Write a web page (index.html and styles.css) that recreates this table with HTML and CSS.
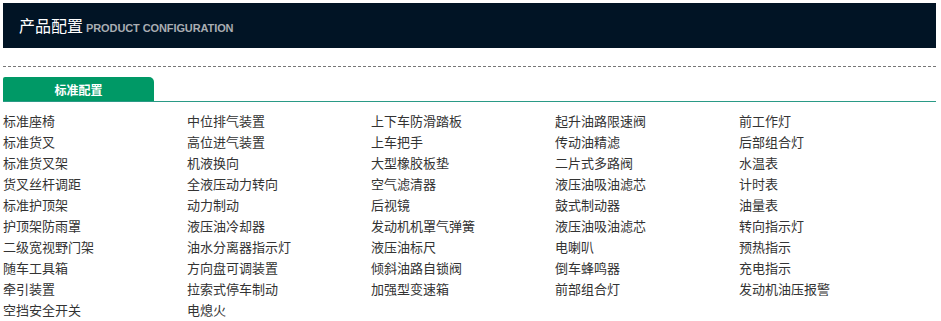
FILE: index.html
```html
<!DOCTYPE html>
<html lang="zh-CN">
<head>
<meta charset="utf-8">
<title>产品配置</title>
<link rel="stylesheet" href="styles.css">
</head>
<body>
<div class="page">
  <div class="head">
    <span class="head-cn">产品配置</span>
    <span class="head-en">PRODUCT CONFIGURATION</span>
  </div>
  <div class="dash"></div>
  <div class="tabs">
    <div class="tab">标准配置</div>
  </div>
  <ul class="list">
    <li>标准座椅</li><li>中位排气装置</li><li>上下车防滑踏板</li><li>起升油路限速阀</li><li>前工作灯</li>
    <li>标准货叉</li><li>高位进气装置</li><li>上车把手</li><li>传动油精滤</li><li>后部组合灯</li>
    <li>标准货叉架</li><li>机液换向</li><li>大型橡胶板垫</li><li>二片式多路阀</li><li>水温表</li>
    <li>货叉丝杆调距</li><li>全液压动力转向</li><li>空气滤清器</li><li>液压油吸油滤芯</li><li>计时表</li>
    <li>标准护顶架</li><li>动力制动</li><li>后视镜</li><li>鼓式制动器</li><li>油量表</li>
    <li>护顶架防雨罩</li><li>液压油冷却器</li><li>发动机机罩气弹簧</li><li>液压油吸油滤芯</li><li>转向指示灯</li>
    <li>二级宽视野门架</li><li>油水分离器指示灯</li><li>液压油标尺</li><li>电喇叭</li><li>预热指示</li>
    <li>随车工具箱</li><li>方向盘可调装置</li><li>倾斜油路自锁阀</li><li>倒车蜂鸣器</li><li>充电指示</li>
    <li>牵引装置</li><li>拉索式停车制动</li><li>加强型变速箱</li><li>前部组合灯</li><li>发动机油压报警</li>
    <li>空挡安全开关</li><li>电熄火</li>
  </ul>
</div>
</body>
</html>
```
FILE: styles.css
```css
html, body {
  margin: 0;
  padding: 0;
  background: #fff;
}
body {
  font-family: "Liberation Sans", "Noto Sans CJK SC", sans-serif;
}
.page {
  padding: 3px 5px 0 3px;
}
.head {
  height: 45px;
  background: #011425;
  display: flex;
  align-items: center;
  padding: 2px 0 0 16px;
  box-sizing: border-box;
}
.head-cn {
  color: #fff;
  font-size: 16px;
  line-height: 1;
}
.head-en {
  color: #a9adb2;
  font-size: 11px;
  font-weight: bold;
  margin-left: 3px;
  padding-top: 2px;
  letter-spacing: -0.1px;
}
.dash {
  margin-top: 18px;
  border-top: 1px dashed #777;
  height: 0;
}
.tabs {
  margin-top: 10px;
  display: flex;
  border-bottom: 1px solid #2a9a86;
}
.tab {
  width: 151px;
  height: 24px;
  background: #009966;
  color: #fff;
  font-size: 12px;
  font-weight: bold;
  display: flex;
  align-items: center;
  justify-content: center;
  border-radius: 2px 5px 0 0;
}
.list {
  list-style: none;
  margin: 0;
  padding: 9px 0 0 0;
  display: grid;
  grid-template-columns: repeat(5, 184px);
}
.list li {
  font-size: 13px;
  line-height: 21px;
  height: 21px;
  color: #333;
  white-space: nowrap;
}
```
